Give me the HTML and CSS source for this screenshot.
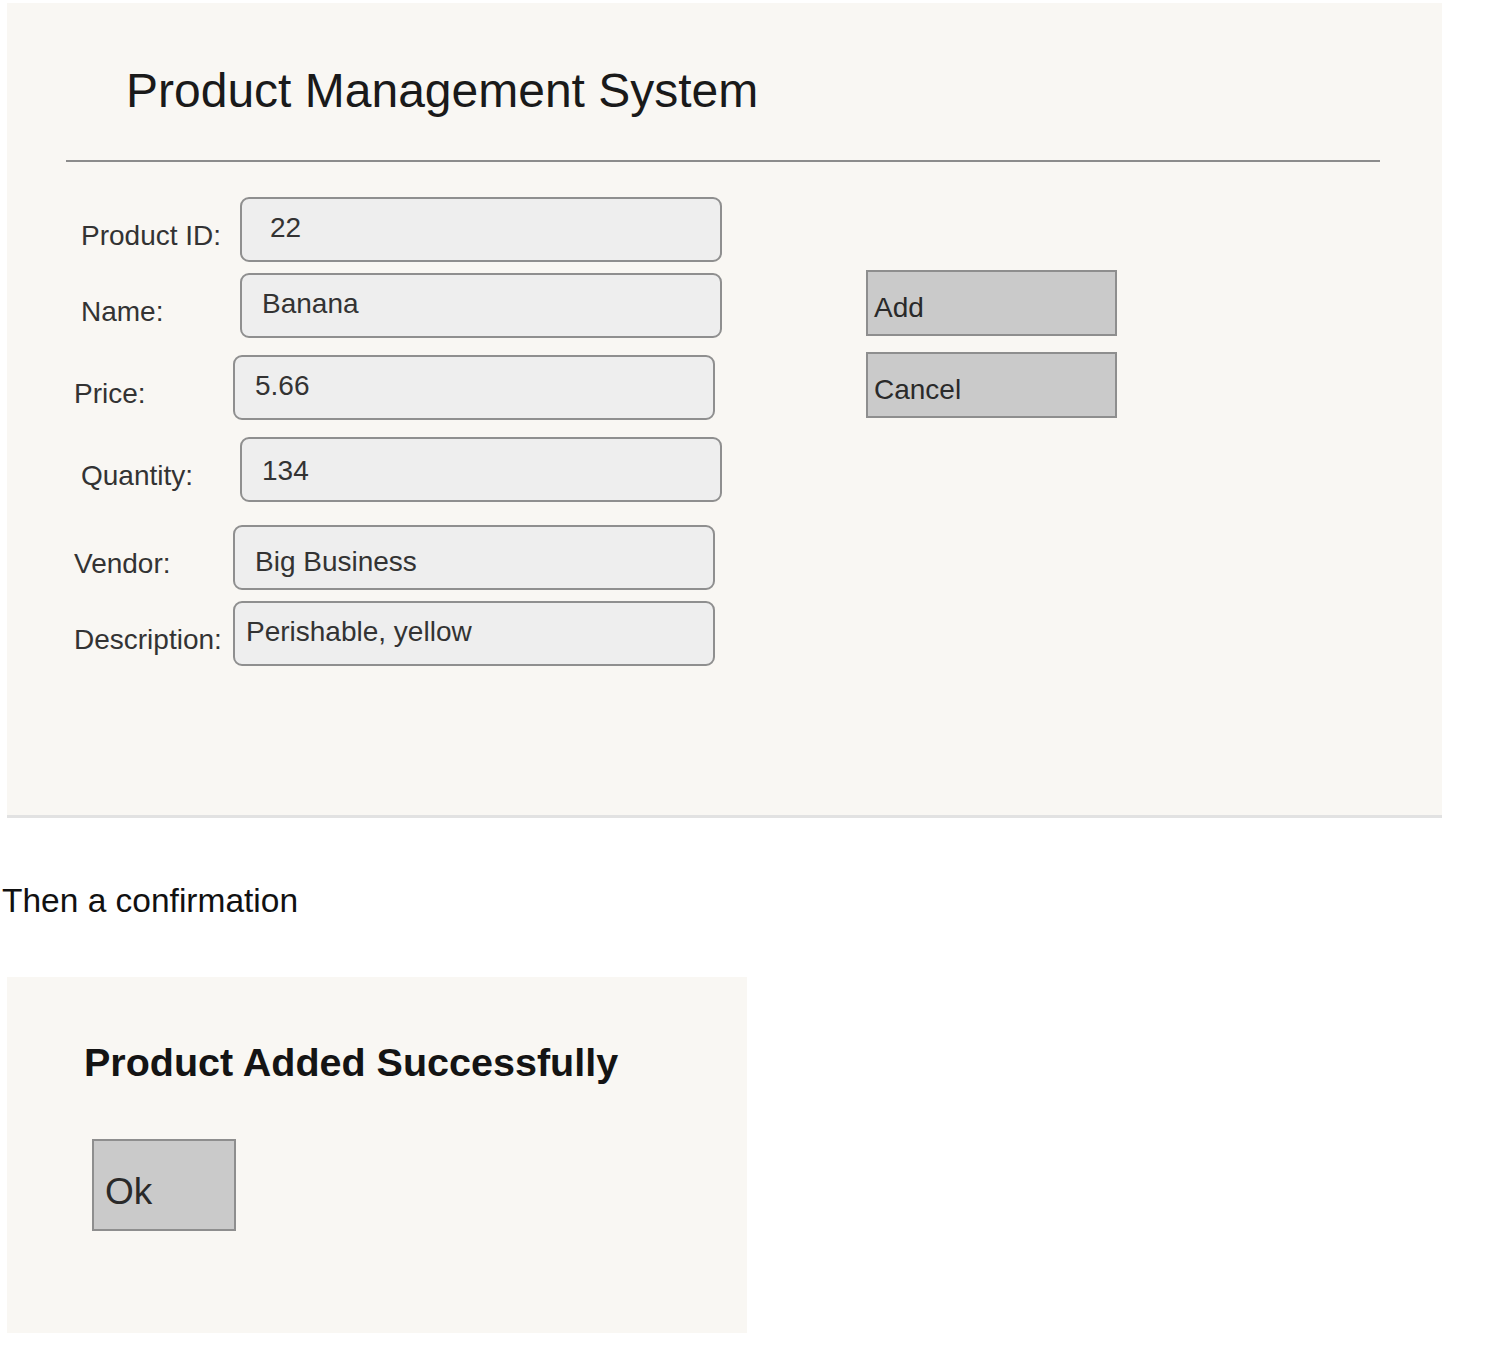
FILE: index.html
```html
<!DOCTYPE html>
<html>
<head>
<meta charset="utf-8">
<link rel="stylesheet" href="styles.css">
</head>
<body>
<section class="panel main-panel">
  <h1 class="title">Product Management System</h1>
  <hr class="rule">
  <div class="content">
    <div class="form">
      <div class="row">
        <span class="label">Product ID:</span>
        <div class="field pad-wide">22</div>
      </div>
      <div class="row gap-s">
        <span class="label">Name:</span>
        <div class="field">Banana</div>
      </div>
      <div class="row shift gap-m">
        <span class="label">Price:</span>
        <div class="field">5.66</div>
      </div>
      <div class="row gap-m">
        <span class="label">Quantity:</span>
        <div class="field mid">134</div>
      </div>
      <div class="row shift gap-l">
        <span class="label">Vendor:</span>
        <div class="field low">Big Business</div>
      </div>
      <div class="row shift gap-s">
        <span class="label">Description:</span>
        <div class="field pad-narrow">Perishable, yellow</div>
      </div>
    </div>
    <div class="actions">
      <button class="btn">Add</button>
      <button class="btn">Cancel</button>
    </div>
  </div>
</section>

<p class="caption">Then a confirmation</p>

<section class="panel dialog">
  <h2 class="dialog-title">Product Added Successfully</h2>
  <button class="btn ok">Ok</button>
</section>
</body>
</html>
```

FILE: styles.css
```css
* { box-sizing: border-box; }

body {
  margin: 0;
  background: #ffffff;
  font-family: "Liberation Sans", Arial, sans-serif;
  color: #222;
}

.panel {
  background: #f9f7f3;
  margin-left: 7px;
}

.main-panel {
  margin-top: 3px;
  width: 1435px;
  height: 815px;
  border-bottom: 3px solid #e2e2e2;
  padding-top: 62px;
}

.title {
  margin: 0 0 0 119px;
  font-size: 48px;
  line-height: 52px;
  font-weight: normal;
  color: #1a1a1a;
}

.rule {
  margin: 43px 0 0 59px;
  width: 1314px;
  border: 0;
  border-top: 2px solid #8c8c8c;
  height: 0;
}

.content {
  display: flex;
  margin-top: 35px;
  margin-left: 74px;
}

.form {
  display: flex;
  flex-direction: column;
  width: 641px;
}

.row {
  display: flex;
  align-items: center;
}

.row.shift { margin-left: -7px; }
.row.gap-s { margin-top: 11px; }
.row.gap-m { margin-top: 17px; }
.row.gap-l { margin-top: 23px; }

.label {
  width: 159px;
  flex: none;
  font-size: 28px;
  color: #333;
  padding-top: 12px;
}

.field {
  width: 482px;
  height: 65px;
  background: #eeeeee;
  border: 2px solid #8f8f8f;
  border-radius: 9px;
  font-size: 28px;
  color: #333;
  padding-left: 20px;
  display: flex;
  align-items: center;
  padding-bottom: 4px;
}

.field.pad-wide { padding-left: 28px; }
.field.pad-narrow { padding-left: 11px; }
.field.mid { padding-bottom: 0; padding-top: 2px; }
.field.low { padding-bottom: 0; padding-top: 8px; }

.actions {
  display: flex;
  flex-direction: column;
  gap: 16px;
  margin-left: 144px;
  margin-top: 73px;
}

.btn {
  font-family: "Liberation Sans", Arial, sans-serif;
  background: #cacaca;
  border: 2px solid #8e8e8e;
  border-radius: 0;
  color: #2a2a2a;
  text-align: left;
  padding: 10px 0 0 6px;
}

.actions .btn {
  width: 251px;
  height: 66px;
  font-size: 28px;
}

.caption {
  margin: 64px 0 0 2px;
  font-size: 33.5px;
  line-height: 38px;
  color: #111;
}

.dialog {
  margin-top: 57px;
  width: 740px;
  height: 356px;
  padding-top: 62px;
}

.dialog-title {
  margin: 0 0 0 77px;
  font-size: 39.5px;
  line-height: 46px;
  font-weight: bold;
  color: #141414;
}

.btn.ok {
  display: block;
  margin: 54px 0 0 85px;
  width: 144px;
  height: 92px;
  font-size: 37px;
  padding: 14px 0 0 11px;
}
```
